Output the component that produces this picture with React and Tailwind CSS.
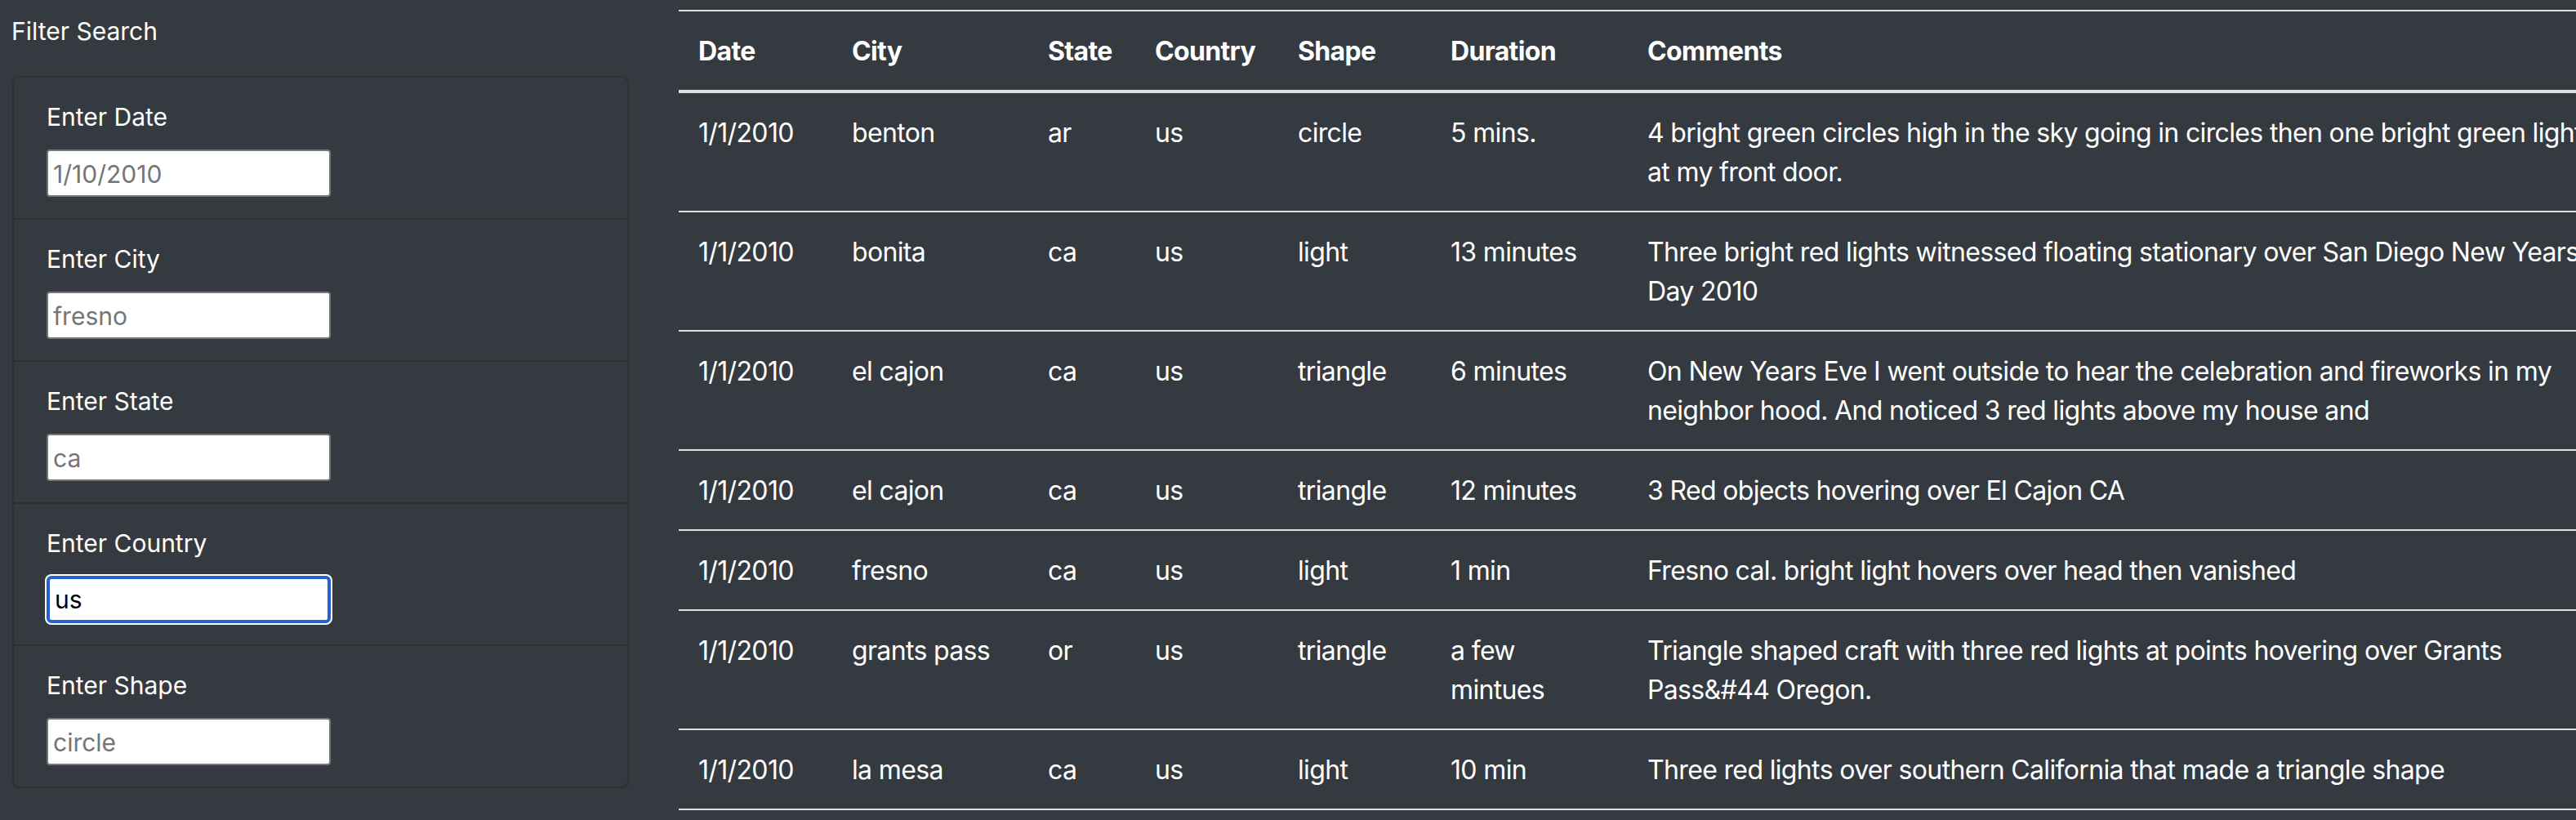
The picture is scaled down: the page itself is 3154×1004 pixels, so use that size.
import React from 'react';

const FILTERS = [
  { label: 'Enter Date', placeholder: '1/10/2010' },
  { label: 'Enter City', placeholder: 'fresno' },
  { label: 'Enter State', placeholder: 'ca' },
  { label: 'Enter Country', value: 'us', focused: true },
  { label: 'Enter Shape', placeholder: 'circle' },
];

const ROWS = [
  ['1/1/2010', 'benton', 'ar', 'us', 'circle', '5 mins.', '4 bright green circles high in the sky going in circles then one bright green light at my front door.'],
  ['1/1/2010', 'bonita', 'ca', 'us', 'light', '13 minutes', 'Three bright red lights witnessed floating stationary over San Diego New Years Day 2010'],
  ['1/1/2010', 'el cajon', 'ca', 'us', 'triangle', '6 minutes', 'On New Years Eve I went outside to hear the celebration and fireworks in my neighbor hood. And noticed 3 red lights above my house and'],
  ['1/1/2010', 'el cajon', 'ca', 'us', 'triangle', '12 minutes', '3 Red objects hovering over El Cajon CA'],
  ['1/1/2010', 'fresno', 'ca', 'us', 'light', '1 min', 'Fresno cal. bright light hovers over head then vanished'],
  ['1/1/2010', 'grants pass', 'or', 'us', 'triangle', 'a few mintues', 'Triangle shaped craft with three red lights at points hovering over Grants Pass&#44 Oregon.'],
  ['1/1/2010', 'la mesa', 'ca', 'us', 'light', '10 min', 'Three red lights over southern California that made a triangle shape'],
  ['1/1/2010', 'lake elsinore', 'ca', 'us', 'light', '5 min', 'Bright light hovering in the sky'],
];

const HEADERS = ['Date', 'City', 'State', 'Country', 'Shape', 'Duration', 'Comments'];
const WIDTHS = ['w-[188px]', 'w-[240px]', 'w-[131px]', 'w-[175px]', 'w-[187px]', 'w-[241px]', 'w-[1227px]'];

const font = { fontFamily: 'Inter, "Noto Sans", sans-serif' };

function FilterItem({ label, placeholder, value, focused }) {
  return (
    <li className="px-[40px] pt-[24px] pb-[26px] border-b-2 border-[#2c3136] last:border-b-0">
      <label className="block text-[30px] leading-[48px] text-white">{label}</label>
      <div className="mt-[16px]">
        {focused ? (
          <input
            readOnly
            value={value}
            className="w-[348px] h-[58px] px-[6px] bg-white text-black text-[30px] border-4 border-[#2463cc] rounded-[6px] shadow-[0_0_0_2px_#ffffff] outline-none"
            style={font}
          />
        ) : (
          <input
            readOnly
            placeholder={placeholder}
            className="w-[348px] h-[58px] px-[6px] pt-[2px] bg-white text-black text-[30px] placeholder:text-[#757575] border-2 border-[#767676] rounded-[4px] outline-none"
            style={font}
          />
        )}
      </div>
    </li>
  );
}

export default function App() {
  return (
    <div className="w-[3154px] h-[1004px] overflow-hidden bg-[#343a40] flex" style={font}>
      <div className="w-[770px] shrink-0 pl-[15px]">
        <p className="text-[30px] leading-[48px] text-white mt-[14px] -ml-[1px]">Filter Search</p>
        <ul className="mt-[31px] border-2 border-[#2c3136] rounded-[8px]">
          {FILTERS.map((f) => (
            <FilterItem key={f.label} {...f} />
          ))}
        </ul>
      </div>

      <div className="ml-[61px] mt-[12px] shrink-0">
        <table className="table-fixed border-collapse w-[2389px] text-white text-[32px] leading-[48px] tracking-[-0.65px]">
          <colgroup>
            {WIDTHS.map((w, i) => (
              <col key={i} className={w} />
            ))}
          </colgroup>
          <thead>
            <tr>
              {HEADERS.map((h) => (
                <th key={h} className="text-left font-bold px-[24px] pt-[25px] pb-[23px] border-t-2 border-b-4 border-[#dee2e6] align-bottom">
                  {h}
                </th>
              ))}
            </tr>
          </thead>
          <tbody>
            {ROWS.map((r, i) => (
              <tr key={i}>
                {r.map((c, j) => (
                  <td key={j} className="px-[24px] pt-[25px] pb-[23px] border-t-2 border-[#dee2e6] align-top">
                    {c}
                  </td>
                ))}
              </tr>
            ))}
          </tbody>
        </table>
      </div>
    </div>
  );
}
